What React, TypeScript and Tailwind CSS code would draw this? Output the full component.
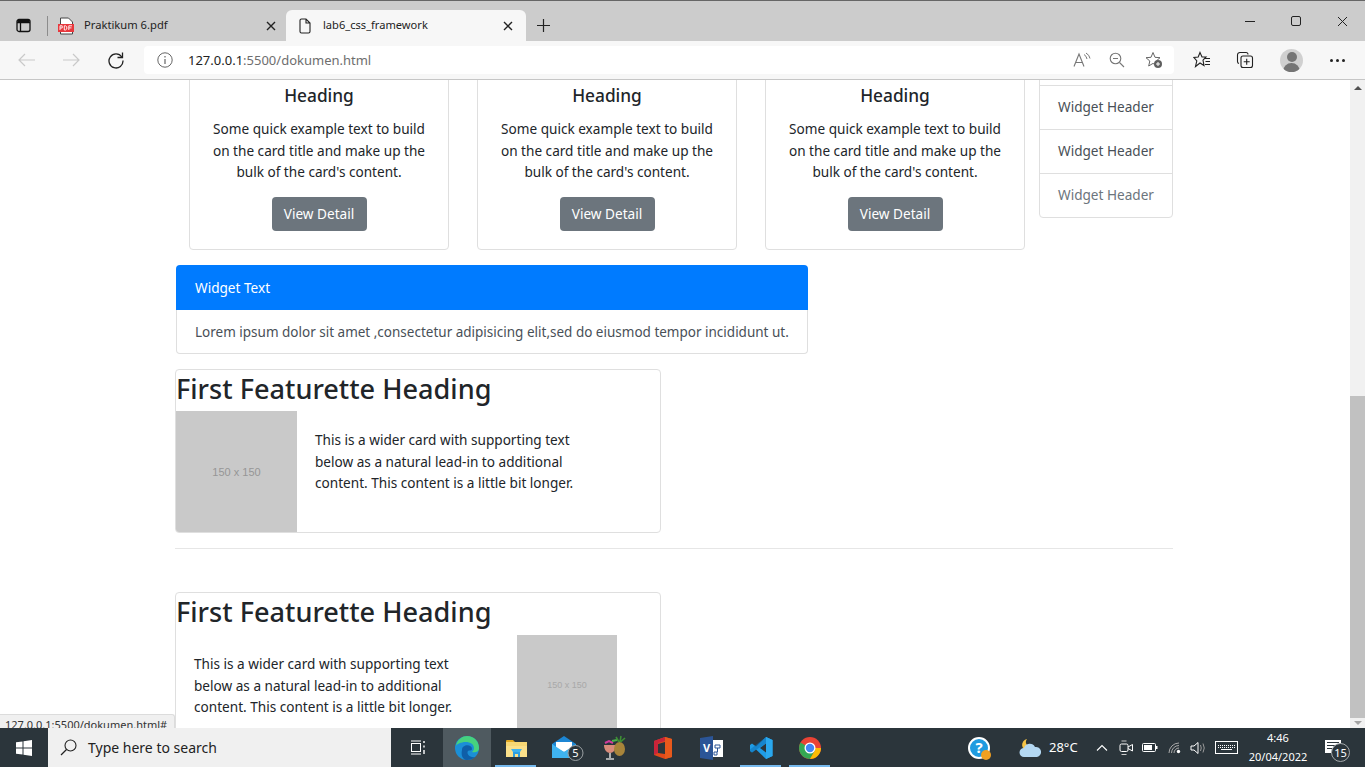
import React from "react";

const Ic = ({ w = 16, h = 16, vb, children, className = "" }: { w?: number; h?: number; vb?: string; children: React.ReactNode; className?: string }) => (
  <svg width={w} height={h} viewBox={vb ?? `0 0 ${w} ${h}`} fill="none" className={`block shrink-0 ${className}`}>{children}</svg>
);

const X = ({ s = 11, c = "#222", sw = 1.4 }: { s?: number; c?: string; sw?: number }) => (
  <Ic w={s} h={s}><path d={`M1 1L${s - 1} ${s - 1}M${s - 1} 1L1 ${s - 1}`} stroke={c} strokeWidth={sw} /></Ic>
);

const Doc = () => (
  <Ic w={12} h={16}><path d="M1 2.5A1.5 1.5 0 0 1 2.5 1H7L11 5V13.5A1.5 1.5 0 0 1 9.5 15H2.5A1.5 1.5 0 0 1 1 13.5ZM7 1V5H11" stroke="#222" strokeWidth="1.1" /></Ic>
);

function TabStrip() {
  return (
    <div className="h-[41px] bg-[#cccccc] border-t border-[#666666] flex items-end text-[#222]">
      <div className="w-[47px] h-[31px] flex items-center justify-center">
        <Ic w={15} h={15}><rect x="1" y="1.5" width="13" height="12" rx="2" stroke="#111" strokeWidth="1.3" /><path d="M1 4.5H14M4.5 4.5V13.5" stroke="#111" strokeWidth="1.3" /><path d="M1.5 2H13.5V4.5H1.5Z" fill="#111" /></Ic>
      </div>
      <div className="w-px h-[20px] bg-[#8c8c8c] mb-[5px]" />
      <div className="w-[238px] h-[31px] flex items-center pl-[10px] pr-[10px]">
        <Ic w={16} h={18} vb="0 0 16 18">
          <path d="M2.500 1H10.500L14.500 5V17H2.500Z" fill="#fff" stroke="#444" strokeWidth="1" />
          <rect x="0" y="7" width="16" height="8" fill="#e8383d" />
          <path d="M2 13V8.800H4.200V11H2M6.300 8.800V13H7.500L8.800 12V9.800L7.500 8.800ZM10.800 13V8.800H14M10.800 10.900H13.500" stroke="#fff" strokeWidth=".9" />
        </Ic>
        <span className="ml-[10px] flex-1 text-[11.2px]">Praktikum 6.pdf</span>
        <X s={10} />
      </div>
      <div className="w-[240px] h-[31px] bg-[#f7f7f7] rounded-t-[6px] flex items-center pl-[13px] pr-[13px]">
        <Doc />
        <span className="ml-[12px] flex-1 text-[11.1px]">lab6_css_framework</span>
        <X s={10} />
      </div>
      <div className="w-[35px] h-[31px] flex items-center justify-center">
        <Ic w={15} h={15}><path d="M7.5 1V14M1 7.5H14" stroke="#222" strokeWidth="1.2" /></Ic>
      </div>
      <div className="flex-1" />
      <div className="w-[138px] h-[40px] flex items-center">
        <div className="w-[46px] flex justify-center"><div className="w-[10px] h-px bg-[#222]" /></div>
        <div className="w-[46px] flex justify-center"><div className="w-[10px] h-[10px] border border-[#222] rounded-[2px]" /></div>
        <div className="w-[46px] flex justify-center"><X s={11} sw={1} /></div>
      </div>
    </div>
  );
}

function Toolbar() {
  const faint = "#c9c9c9";
  return (
    <div className="h-[39px] bg-[#f7f7f7] border-b border-[#c6c6c6] flex items-center pl-[18px] pr-[12px]">
      <Ic w={18} h={14}><path d="M1 7H17M7 1L1 7L7 13" stroke={faint} strokeWidth="1.2" /></Ic>
      <Ic w={18} h={14} className="ml-[26px]"><path d="M1 7H17M11 1L17 7L11 13" stroke={faint} strokeWidth="1.2" /></Ic>
      <Ic w={18} h={18} className="ml-[27px]"><path d="M14.8 6A7 7 0 1 0 16 9.5" stroke="#222" strokeWidth="1.3" /><path d="M15.5 1.5V6.5H10.5" stroke="#222" strokeWidth="1.3" /></Ic>
      <div className="ml-[19px] w-[1030px] h-[28px] bg-white rounded-[4px] flex items-center pl-[13px] pr-[11px]">
        <Ic w={16} h={16}><circle cx="8" cy="8" r="7.2" stroke="#666" strokeWidth="1" /><path d="M8 7V12M8 4V5.4" stroke="#666" strokeWidth="1.2" /></Ic>
        <span className="ml-[15px] mt-[1px] text-[13px] text-[#222]">127.0.0.1<span className="text-[#6e6e6e]">:5500/dokumen.html</span></span>
        <div className="flex-1" />
        <Ic w={18} h={16}><path d="M1 14.5L6 2L11 14.5M2.8 10.5H9.2" stroke="#777" strokeWidth="1.1" /><path d="M11 2.5Q13.5 4 14 7M13 1Q16.5 3 17 6.5" stroke="#777" strokeWidth="1" /></Ic>
        <Ic w={16} h={16} className="ml-[18px]"><circle cx="6.5" cy="6.5" r="5.3" stroke="#777" strokeWidth="1.1" /><path d="M10.5 10.5L15 15M4 6.5H9" stroke="#777" strokeWidth="1.1" /></Ic>
        <Ic w={18} h={18} className="ml-[20px]"><path d="M8 1.5L10 6.3L15 6.7L11.3 10L12.3 15L8 12.4L3.7 15L4.8 10L1 6.7L6 6.3Z" stroke="#666" strokeWidth="1" /><circle cx="13" cy="13" r="4" fill="#5f5f5f" /><path d="M13 11V15M11 13H15" stroke="#fff" strokeWidth="1" /></Ic>
      </div>
      <Ic w={18} h={18} className="ml-[19px]"><path d="M7 1.5L9 6H13L10 9.2L11 14.5L7 12L2.5 15.5L3.8 9.8L1 6.5L5.2 6Z" stroke="#222" strokeWidth="1.1" /><path d="M12 7.5H17M12.5 10.5H17M12 13.5H17" stroke="#222" strokeWidth="1.1" /></Ic>
      <Ic w={18} h={18} className="ml-[25px]"><path d="M3 12.5A2 2 0 0 1 1.5 10.5V4A2.5 2.5 0 0 1 4 1.5H10A2 2 0 0 1 12 3.5" stroke="#222" strokeWidth="1.1" /><rect x="5" y="5" width="11.5" height="11.5" rx="2" stroke="#222" strokeWidth="1.1" /><path d="M10.7 7.7V13.7M7.7 10.7H13.7" stroke="#222" strokeWidth="1.1" /></Ic>
      <div className="ml-[26px] w-[23px] h-[23px] rounded-full bg-[#d0d0d0] overflow-hidden flex flex-col items-center">
        <div className="w-[10px] h-[10px] rounded-full bg-[#757575] mt-[3px]" />
        <div className="w-[17px] h-[9px] rounded-t-full bg-[#757575] mt-[1px]" />
      </div>
      <div className="ml-[27px] flex gap-[3px]">
        <div className="w-[3px] h-[3px] rounded-full bg-[#222]" />
        <div className="w-[3px] h-[3px] rounded-full bg-[#222]" />
        <div className="w-[3px] h-[3px] rounded-full bg-[#222]" />
      </div>
    </div>
  );
}

function Card() {
  return (
    <div className="w-[260px] h-[180px] border border-[#dfdfdf] rounded-[4px] text-center text-[#212529] flex flex-col items-center">
      <h5 className="text-[17.3px] leading-[22px] font-medium mt-[14px]">Heading</h5>
      <p className="mt-[11px] w-[230px] text-[13.6px] leading-[21.6px]">Some quick example text to build on the card title and make up the bulk of the card's content.</p>
      <button className="mt-[14px] w-[95px] h-[34px] bg-[#6c757d] rounded-[4px] text-white text-[13.6px]">View Detail</button>
    </div>
  );
}

function Side() {
  return (
    <div className="w-[134px] border border-[#dfdfdf] rounded-b-[4px] flex flex-col -mt-[1px] pt-[5px] text-[13.6px]">
      <div className="h-[44px] pb-[1px] border-t border-[#dfdfdf] flex items-center justify-center text-[#495057]">Widget Header</div>
      <div className="h-[44px] border-t border-[#dfdfdf] flex items-center justify-center text-[#495057]">Widget Header</div>
      <div className="h-[44px] border-t border-[#dfdfdf] flex items-center justify-center text-[#6c757d]">Widget Header</div>
    </div>
  );
}

function Featurette({ flip }: { flip?: boolean }) {
  const text = "This is a wider card with supporting text below as a natural lead-in to additional content. This content is a little bit longer.";
  return (
    <div className="w-[486px] h-[164px] border border-[#dfdfdf] rounded-[4px] overflow-hidden">
      <h2 className={`${flip ? "h-[42px]" : "h-[41px]"} text-[27.1px] leading-[38px] font-medium whitespace-nowrap`}>First Featurette Heading</h2>
      {flip ? (
        <div className="flex">
          <p className="ml-[18px] mt-[18px] w-[272px] text-[13.6px] leading-[21.6px]">{text}</p>
          <div className="ml-[51px] w-[100px] h-[100px] pt-[2px] bg-[#c9c9c9] flex items-center justify-center text-[9px] text-[#a8a8a8] font-['Liberation_Sans',sans-serif]">150 x 150</div>
        </div>
      ) : (
        <div className="flex">
          <div className="w-[121px] h-[121px] pt-[2px] bg-[#c9c9c9] flex items-center justify-center text-[11px] text-[#969696] font-['Liberation_Sans',sans-serif]">150 x 150</div>
          <p className="ml-[18px] mt-[18px] w-[272px] text-[13.6px] leading-[21.6px]">{text}</p>
        </div>
      )}
    </div>
  );
}

function Page() {
  return (
    <div className="w-[998px] ml-[175px] text-[#212529]">
      <div className="flex pl-[14px] -mt-[10px] h-[180px]">
        <div className="flex gap-[28px]"><Card /><Card /><Card /></div>
        <div className="ml-[14px] mt-[10px]"><Side /></div>
      </div>
      <div className="ml-[1px] mt-[15px] w-[632px] text-[13.6px]">
        <div className="h-[45px] pt-[1px] bg-[#007bff] rounded-t-[4px] text-white flex items-center pl-[19px]">Widget Text</div>
        <div className="h-[44px] pt-[1px] border-x border-b border-[#dfdfdf] rounded-b-[4px] flex items-center pl-[18px] text-[13.5px] text-[#495057] whitespace-nowrap">Lorem ipsum dolor sit amet ,consectetur adipisicing elit,sed do eiusmod tempor incididunt ut.</div>
      </div>
      <div className="mt-[15px]"><Featurette /></div>
      <hr className="mt-[15px] border-t border-[#e6e6e6]" />
      <div className="mt-[43px]"><Featurette flip /></div>
    </div>
  );
}

function Scrollbar() {
  return (
    <div className="w-[15px] shrink-0 bg-[#f1f1f1] flex flex-col items-center">
      <div className="h-[316px] w-full flex justify-center pt-[6px]">
        <div className="w-0 h-0 border-x-[4px] border-x-transparent border-b-[4px] border-b-[#505050]" />
      </div>
      <div className="w-full h-[322px] bg-[#c1c1c1]" />
      <div className="flex-1 w-full flex justify-center items-center">
        <div className="w-0 h-0 border-x-[4px] border-x-transparent border-t-[4px] border-t-[#a3a3a3]" />
      </div>
    </div>
  );
}

const Edge = () => (
  <Ic w={26} h={26} vb="0 0 26 26">
    <circle cx="13" cy="13" r="12" fill="#1b8fd6" />
    <path d="M2 11C3 4 9 1 13 1C20 1 25 6 25 13C25 17 21 18 18 17C21 15 21 9 15 7.500C9 6 3 9 2 11Z" fill="#46d27e" />
    <path d="M8 15C8 9 18 9 18 14C18 16 15 15 14 16C12 19 16 23 21 22C18 25 14 25 12 25C8 24 7 19 8 15Z" fill="#0f5fa8" />
  </Ic>
);

const Folder = () => (
  <Ic w={22} h={20}>
    <path d="M1 3A1 1 0 0 1 2 2H8L10 4H1Z" fill="#e3a921" />
    <rect x="1" y="4" width="21" height="15" fill="#f7d774" />
    <rect x="1" y="8" width="21" height="11" fill="#fbe08a" />
    <path d="M8 19V14H15V19H13V16H10V19Z" fill="#2f9fe0" />
    <path d="M6 11H17L15 14H8Z" fill="#3fb2ee" />
  </Ic>
);

const Mail = () => (
  <Ic w={34} h={26}>
    <path d="M1 9L13 1L25 9V23H1Z" fill="#1c86d4" />
    <path d="M5 7H21V13L13 17L5 13Z" fill="#fff" />
    <path d="M1 9L13 17L25 9V23H1Z" fill="#3fb3f0" />
    <circle cx="24.500" cy="18" r="7.500" fill="#2b353b" stroke="#9aa0a3" strokeWidth="1" />
    <text x="24.500" y="22" textAnchor="middle" fontSize="11" fill="#fff" fontFamily="Noto Sans">5</text>
  </Ic>
);

const Bartender = () => (
  <Ic w={24} h={26}>
    <path d="M2 10H14C14 15 11 18 8 18C5 18 2 15 2 10Z" fill="#d98b7a" />
    <path d="M8 18V23M4 24H12" stroke="#cfcfcf" strokeWidth="1.6" />
    <path d="M3 8L7 6L11 8" stroke="#d23a9c" strokeWidth="2" />
    <path d="M10 6L15 5" stroke="#49b34a" strokeWidth="2" />
    <ellipse cx="17.500" cy="14" rx="5.500" ry="7" fill="#a8843a" />
    <path d="M17 7L14 2M18 7L19 1M18.500 7L23 3" stroke="#3e8f35" strokeWidth="1.600" />
  </Ic>
);

const Office = () => (
  <Ic w={20} h={24}>
    <path d="M1 5L12 1L19 3V21L12 23L1 19Z" fill="#e1491a" />
    <path d="M1 5L12 1V5L5 7V17L1 19Z" fill="#c9243a" />
    <path d="M5 8L12 6V18L5 17Z" fill="#2b353b" />
    <path d="M12 1L19 3V21L12 23Z" fill="#e8591c" />
  </Ic>
);

const Visio = () => (
  <Ic w={24} h={24}>
    <rect x="8" y="4" width="15" height="17" fill="#fff" />
    <path d="M15 9H20V12H15ZM17.500 12V16M14 16H17V19H14Z" stroke="#2b5597" strokeWidth="1" />
    <path d="M0 2L13 0V24L0 22Z" fill="#2b5597" />
    <text x="6.500" y="16" textAnchor="middle" fontSize="11" fontWeight="700" fill="#fff" fontFamily="Noto Sans">V</text>
  </Ic>
);

const VSCode = () => (
  <Ic w={24} h={24}>
    <path d="M17 1L23.500 4V20L17 23L7 13.500L3 16.500L1 15V9L3 7.500L7 10.500ZM17 7.500L11 12L17 16.500Z" fill="#1f9ce6" />
    <path d="M17 1L23.500 4V20L17 23Z" fill="#2aa8ee" />
    <path d="M17 1V7.500L3 16.500L1 15V13.500Z" fill="#0f73b8" opacity=".55" />
  </Ic>
);

const Chrome = () => (
  <Ic w={24} h={24}>
    <circle cx="12" cy="12" r="11" fill="#ea4335" />
    <path d="M12 12L2.500 6.500A11 11 0 0 0 12 23L17.500 13.500Z" fill="#34a853" />
    <path d="M12 12H23A11 11 0 0 1 12 23L17.500 13.500Z" fill="#fbbc05" />
    <circle cx="12" cy="12" r="5.500" fill="#fff" />
    <circle cx="12" cy="12" r="4.200" fill="#4285f4" />
  </Ic>
);

function TB({ active, under, children, w = 49 }: { active?: boolean; under?: boolean; children: React.ReactNode; w?: number }) {
  return (
    <div style={{ width: w }} className={`h-[39px] relative flex items-center justify-center ${active ? "bg-[#4f5a60]" : ""}`}>
      {children}
      {under && <div className="absolute bottom-0 inset-x-[4px] h-[2px] bg-[#76b9ed]" />}
    </div>
  );
}

function Taskbar() {
  return (
    <div className="h-[39px] bg-[#2b353b] flex items-center text-white shrink-0">
      <div className="w-[48px] flex justify-center">
        <Ic w={16} h={16}><path d="M0 2.300L6.500 1.400V7.500H0ZM7.500 1.300L16 0V7.500H7.500ZM0 8.500H6.500V14.600L0 13.700ZM7.500 8.500H16V16L7.500 14.700Z" fill="#fff" /></Ic>
      </div>
      <div className="w-[343px] h-[39px] bg-[#f0f0f0] flex items-center pl-[12px] text-[#222] text-[14px]">
        <Ic w={17} h={17}><circle cx="10.500" cy="6.500" r="5.500" stroke="#222" strokeWidth="1.1" /><path d="M6.500 10.500L1 16" stroke="#222" strokeWidth="1.300" /></Ic>
        <span className="ml-[11px]">Type here to search</span>
      </div>
      <div className="w-[52px] flex justify-center">
        <Ic w={17} h={15}><path d="M2 1H12M2 14H12" stroke="#fff" strokeWidth="1" /><rect x="2.500" y="3.500" width="9" height="8" stroke="#fff" /><path d="M15 1V3M15 5.500V7.500M15 10V14" stroke="#fff" strokeWidth="1.400" /></Ic>
      </div>
      <TB active w={48}><Edge /></TB>
      <TB under w={49}><Folder /></TB>
      <TB><div className="ml-[6px]"><Mail /></div></TB>
      <TB><Bartender /></TB>
      <TB><Office /></TB>
      <TB><Visio /></TB>
      <TB under><VSCode /></TB>
      <TB under><Chrome /></TB>
      <div className="flex-1" />
      <div className="relative w-[22px] h-[22px] rounded-full bg-[#1f9be0] border-[2px] border-white flex items-center justify-center text-[15px] font-bold mr-[29px]">
        ?
        <div className="absolute -right-[3px] -bottom-[3px] w-[10px] h-[10px] rounded-full bg-[#f0a020]" />
      </div>
      <Ic w={23} h={20} vb="0 0 23 20"><path d="M8 1A6 6 0 1 0 15 8A5 5 0 0 1 8 1Z" fill="#f6c445" /><path d="M5 19A4.500 4.500 0 0 1 5 10A6 6 0 0 1 16 9A5 5 0 0 1 18 19Z" fill="#b4d8f2" /></Ic>
      <span className="ml-[7px] w-[32px] text-[13px]">28°C</span>
      <div className="ml-[9px] w-[24px] flex justify-center"><Ic w={12} h={7}><path d="M1 6.500L6 1.500L11 6.500" stroke="#fff" strokeWidth="1.100" /></Ic></div>
      <div className="w-[24px] flex justify-center"><Ic w={15} h={17}><rect x="1" y="5" width="8" height="7.500" rx="1.500" stroke="#fff" /><path d="M9 8L13.500 5.500V12L9 9.500" stroke="#fff" /><path d="M2.500 2H7.500M2.500 15.500H7.500" stroke="#ccc" /></Ic></div>
      <div className="w-[24px] flex justify-center"><Ic w={16} h={9}><rect x=".5" y=".5" width="13" height="8" rx="1" stroke="#fff" /><rect x="2" y="2" width="8" height="5" fill="#fff" /><rect x="14" y="3" width="1.500" height="3" fill="#fff" /></Ic></div>
      <div className="w-[26px] flex justify-center"><Ic w={14} h={13}><path d="M1 12A10 10 0 0 1 11 2M3.500 12A7.500 7.500 0 0 1 11 4.500M6 12A5 5 0 0 1 11 7" stroke="#a9a9a9" /><circle cx="10.500" cy="10.500" r="1.700" fill="#fff" /></Ic></div>
      <div className="w-[20px] flex justify-center"><Ic w={17} h={14}><path d="M1 5H4L8 1.500V12.500L4 9H1Z" stroke="#fff" /><path d="M10.500 4Q12 7 10.500 10M13 2.500Q15.500 7 13 11.500" stroke="#9a9a9a" /></Ic></div>
      <div className="ml-[7px] w-[23px] h-[13px] border border-white flex flex-col justify-center gap-[1px] px-[2px]">
        <div className="h-[1px] border-t border-dotted border-white" />
        <div className="h-[1px] border-t border-dotted border-white" />
        <div className="h-[1px] bg-white mx-[3px]" />
      </div>
      <div className="ml-[9px] w-[62px] text-center text-[11px] leading-[19px] -mt-[1px]">
        <div>4:46</div>
        <div>20/04/2022</div>
      </div>
      <div className="relative ml-[16px] mr-[23px] w-[17px] h-[15px]">
        <div className="w-[16px] h-[13px] bg-white flex flex-col gap-[2px] pt-[2px] px-[2px]"><div className="h-px bg-[#2b353b]" /><div className="h-px bg-[#2b353b]" /><div className="h-px bg-[#2b353b]" /></div>
        <div className="absolute left-[6px] top-[3px] w-[19px] h-[19px] rounded-full bg-[#2b353b] border border-[#a5a9ab] flex items-center justify-center text-[11px] leading-none">15</div>
      </div>
    </div>
  );
}

export default function App() {
  return (
    <div className="w-[1365px] h-[767px] overflow-hidden flex flex-col bg-white font-['Noto_Sans',sans-serif]">
      <TabStrip />
      <Toolbar />
      <div className="relative flex-1 flex min-h-0">
        <div className="flex-1 min-w-0 overflow-hidden"><Page /></div>
        <Scrollbar />
        <div className="absolute left-0 bottom-0 w-[175px] h-[14px] bg-[#f0f0f0] border-t border-r border-[#dcdcdc] rounded-tr-[3px] overflow-hidden pl-[5px] text-[11px] leading-[19px] text-[#333] whitespace-nowrap">127.0.0.1:5500/dokumen.html#</div>
      </div>
      <Taskbar />
    </div>
  );
}
